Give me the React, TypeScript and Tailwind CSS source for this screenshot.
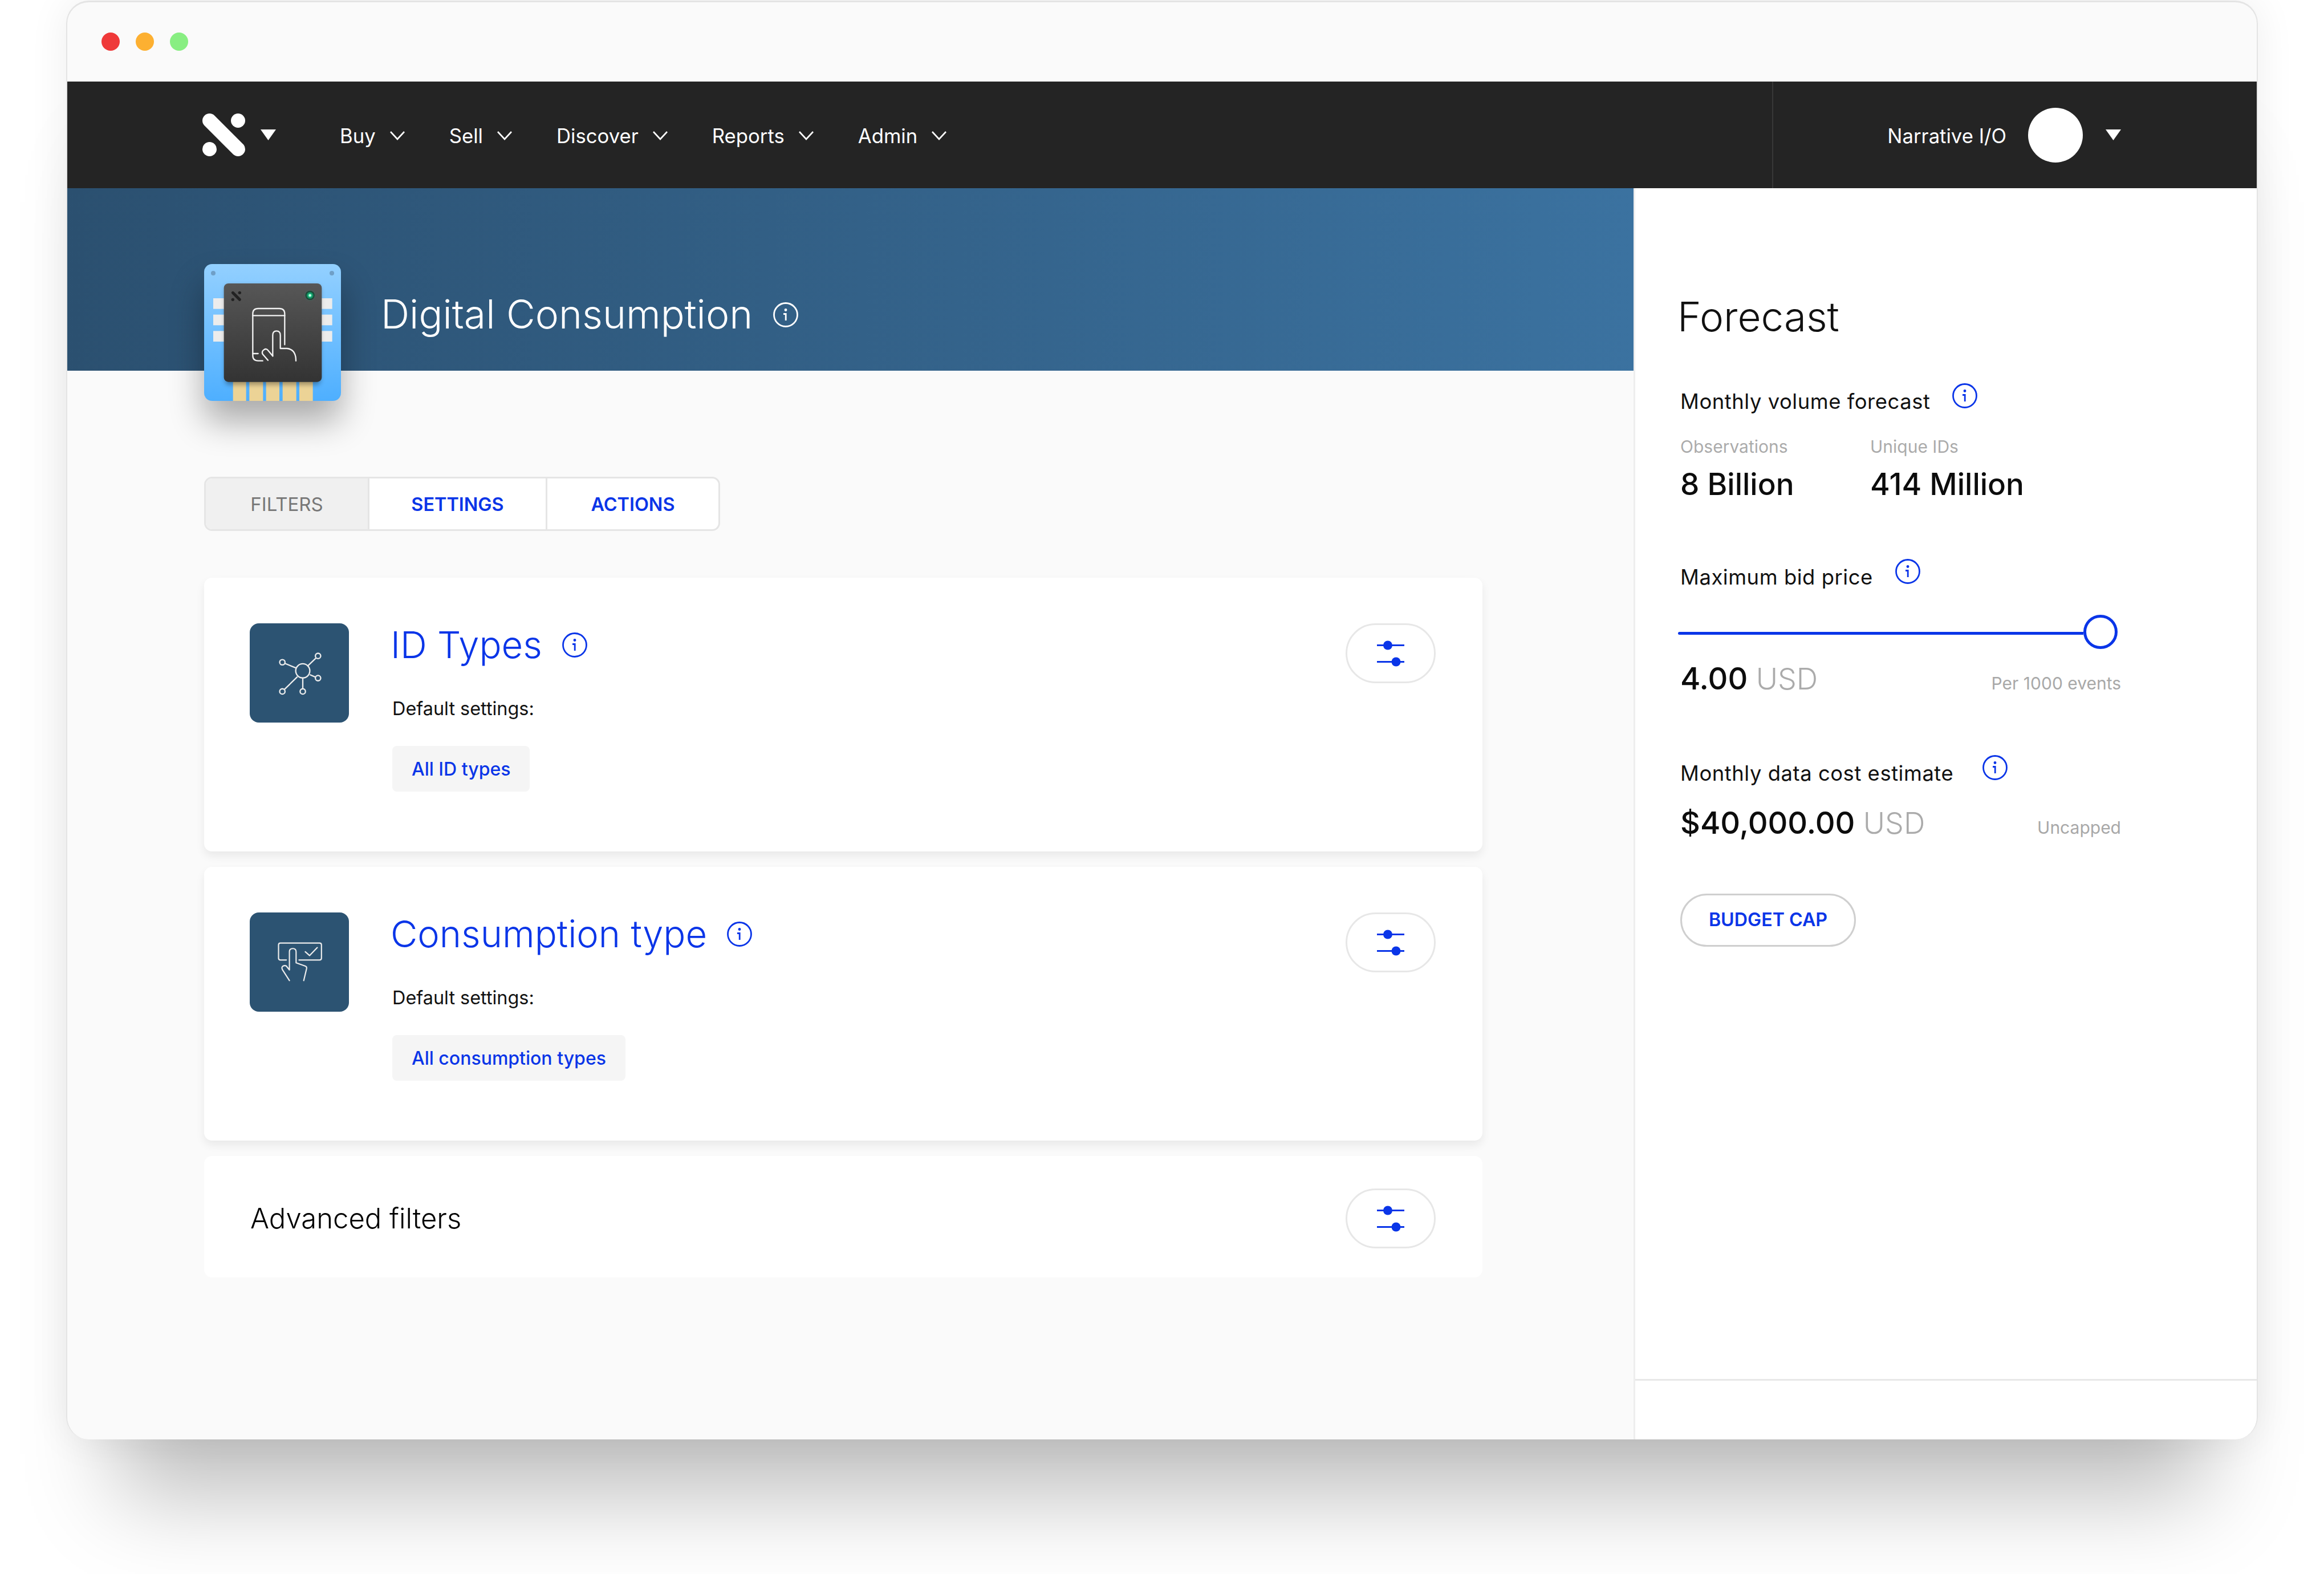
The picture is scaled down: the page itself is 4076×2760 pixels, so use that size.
import React from 'react'

function Caret({ className = '' }: { className?: string }) {
  return (
    <svg width="27" height="19" viewBox="0 0 27 19" className={className}>
      <polygon points="0,0 27,0 13.5,19" fill="#fff" />
    </svg>
  )
}

function Chevron() {
  return (
    <svg width="28" height="17" viewBox="0 0 28 17" fill="none" stroke="#fff" strokeWidth="2.6" className="mt-[3px]">
      <polyline points="2,2 14,15 26,2" />
    </svg>
  )
}

function Logo() {
  return (
    <svg width="75" height="75" viewBox="0 0 75 75">
      <line x1="12.5" y1="12.5" x2="62.5" y2="62.5" stroke="#fff" strokeWidth="25" strokeLinecap="round" />
      <circle cx="62.5" cy="12.5" r="12.5" fill="#fff" />
      <circle cx="12.5" cy="62.5" r="12.5" fill="#fff" />
    </svg>
  )
}

function InfoIcon({ className = '', color = '#0a35e8' }: { className?: string; color?: string }) {
  return (
    <svg width="44" height="44" viewBox="0 0 44 44" fill="none" className={`shrink-0 ${className}`}>
      <circle cx="22" cy="22" r="20.5" stroke={color} strokeWidth="2.8" />
      <circle cx="22" cy="13.5" r="2.4" fill={color} />
      <path d="M18 20.5h4.2V32" stroke={color} strokeWidth="2.8" />
    </svg>
  )
}

function ChipArt() {
  return (
    <svg width="240" height="240" viewBox="54 66 720 720">
      <defs>
        <linearGradient id="chipBlue" x1="0" y1="0" x2="0" y2="1">
          <stop offset="0" stopColor="#93d0ff" />
          <stop offset="1" stopColor="#4eafff" />
        </linearGradient>
        <linearGradient id="chipDark" x1="0" y1="0" x2="0" y2="1">
          <stop offset="0" stopColor="#575757" />
          <stop offset="1" stopColor="#333333" />
        </linearGradient>
        <filter id="chipBlur" x="-20%" y="-20%" width="140%" height="140%">
          <feGaussianBlur stdDeviation="12" />
        </filter>
        <filter id="ledGlow" x="-100%" y="-100%" width="300%" height="300%">
          <feGaussianBlur stdDeviation="6" />
        </filter>
      </defs>
      <rect x="54" y="66" width="720" height="720" rx="42" fill="url(#chipBlue)" />
      <circle cx="102" cy="114" r="12" fill="#6f9fc7" />
      <circle cx="726" cy="114" r="12" fill="#6f9fc7" />
      <g fill="#ececec">
        <rect x="102" y="246" width="70" height="56" />
        <rect x="102" y="332" width="70" height="56" />
        <rect x="102" y="418" width="70" height="56" />
        <rect x="660" y="246" width="68" height="56" />
        <rect x="660" y="332" width="68" height="56" />
        <rect x="660" y="418" width="68" height="56" />
      </g>
      <g fill="#ecd396">
        <rect x="206" y="670" width="69" height="116" />
        <rect x="292" y="670" width="72" height="116" />
        <rect x="380" y="670" width="70" height="116" />
        <rect x="467" y="670" width="72" height="116" />
        <rect x="555" y="670" width="71" height="116" />
      </g>
      <rect x="165" y="180" width="500" height="520" rx="20" fill="#000" opacity="0.35" filter="url(#chipBlur)" />
      <rect x="158" y="168" width="515" height="518" rx="24" fill="url(#chipDark)" />
      <g fill="#222">
        <line x1="205" y1="217" x2="241" y2="253" stroke="#222" strokeWidth="15" strokeLinecap="round" />
        <circle cx="241" cy="217" r="8" />
        <circle cx="205" cy="253" r="8" />
      </g>
      <circle cx="611" cy="231" r="24" fill="#1a1a1a" />
      <circle cx="611" cy="231" r="18" fill="#19d08a" filter="url(#ledGlow)" />
      <circle cx="611" cy="231" r="7" fill="#c8ffe6" />
      <g fill="none" stroke="#f2f2f2" strokeWidth="7" strokeLinecap="round" strokeLinejoin="round">
        <path d="M362 575H338Q310 575 310 547V328Q310 300 338 300H450Q478 300 478 328V490" />
        <path d="M310 337H478" />
        <path d="M310 537H338" />
        <path d="M415 550V440Q415 418 435 418Q455 418 455 440V510H490Q537 515 537 575" />
        <path d="M390 572L362 540Q355 525 370 516Q382 508 392 522L415 550" />
      </g>
    </svg>
  )
}

function NetworkIcon() {
  return (
    <svg width="174" height="174" viewBox="54 36 520 520" fill="none" stroke="#ececec" strokeWidth="7">
      <circle cx="332" cy="285" r="37" />
      <circle cx="225" cy="240" r="14" />
      <circle cx="412" cy="207" r="14" />
      <circle cx="412" cy="323" r="14" />
      <circle cx="225" cy="393" r="14" />
      <circle cx="332" cy="393" r="14" />
      <path d="M238 246L297 270M402 217L359 258M369 305L399 318M304 316L235 383M332 322V379" />
    </svg>
  )
}

function TouchIcon() {
  return (
    <svg width="174" height="174" viewBox="54 56 520 520" fill="none" stroke="#ececec" strokeWidth="6.5" strokeLinecap="round" strokeLinejoin="round">
      <path d="M246 305H215Q205 305 205 295V226Q205 216 215 216H420Q430 216 430 226V295Q430 305 420 305H312" />
      <path d="M262 413L225 355Q218 340 233 335Q245 332 250 342L262 357V262Q262 245 280 245Q297 245 297 262V320L345 337Q354 340 352 350L337 413" />
      <path d="M345 262L368 282L408 240" />
    </svg>
  )
}

function SliderIcon() {
  return (
    <svg width="48" height="46" viewBox="0 0 48 46" fill="#0a35e8">
      <rect x="0" y="7" width="48" height="3" />
      <rect x="0" y="36" width="48" height="3" />
      <circle cx="19" cy="8.5" r="8" />
      <circle cx="33.5" cy="37.5" r="8" />
    </svg>
  )
}

function SettingsButton() {
  return (
    <button className="flex h-[105px] w-[158px] shrink-0 items-center justify-center rounded-full border-[3px] border-[#e7e7e7] bg-white">
      <SliderIcon />
    </button>
  )
}

const navItems = ['Buy', 'Sell', 'Discover', 'Reports', 'Admin']

function Navbar() {
  return (
    <div className="flex h-[187px] shrink-0 items-center bg-[#242424] pl-[237px] text-[34.7px] text-white">
      <Logo />
      <Caret className="ml-[27px] mr-[112px]" />
      <div className="flex items-center gap-[77px]">
        {navItems.map((item) => (
          <div key={item} className="flex items-center gap-[24px]">
            <span className="pt-[3px]">{item}</span>
            <Chevron />
          </div>
        ))}
      </div>
      <div className="ml-auto flex h-full w-[850px] items-center justify-end border-l-[2px] border-[#383838] pr-[238px]">
        <span className="pt-[3px]">Narrative I/O</span>
        <div className="ml-[38px] h-[96px] w-[96px] rounded-full bg-white" />
        <Caret className="ml-[40px]" />
      </div>
    </div>
  )
}

function FilterCard({ icon, title, chip }: { icon: React.ReactNode; title: string; chip: string }) {
  return (
    <div className="flex h-[480px] items-start rounded-[14px] bg-white pl-[80px] pr-[82px] pt-[80px] shadow-[0_8px_16px_rgba(0,0,0,0.07)]">
      <div className="flex h-[174px] w-[174px] shrink-0 items-center justify-center rounded-[16px] bg-[#2c5372]">
        {icon}
      </div>
      <div className="ml-[76px] flex-1">
        <div className="-ml-[3px] flex h-[76px] items-center gap-[35px] text-[65px] font-light text-[#0a35e8]">
          <span>{title}</span>
          <InfoIcon />
        </div>
        <div className="mt-[52px] text-[32.4px] leading-[44px] text-[#111]">Default settings:</div>
        <div className="mt-[43px] inline-flex h-[80px] items-center rounded-[8px] bg-[#f5f5f5] px-[34px] pt-[2px] text-[32px] font-medium text-[#0a35e8]">
          {chip}
        </div>
      </div>
      <SettingsButton />
    </div>
  )
}

function MainColumn() {
  return (
    <div className="w-[2747px] shrink-0 bg-[#fafafa]">
      <div className="flex h-[320px] items-start bg-gradient-to-r from-[#2b5070] to-[#3b72a0] pl-[240px] pt-[133px]">
        <div className="h-[240px] w-[240px] shrink-0 rounded-[16px] shadow-[0_36px_60px_rgba(0,0,0,0.32)]">
          <ChipArt />
        </div>
        <div className="ml-[70px] mt-[44px] flex h-[88px] items-center gap-[36px] text-[69.7px] font-light text-white">
          <span>Digital Consumption</span>
          <InfoIcon color="#ffffff" className="mt-[2px]" />
        </div>
      </div>

      <div className="ml-[240px] mt-[186px] flex h-[95px] w-[905px] overflow-hidden rounded-[14px] border-[3px] border-[#e5e5e5] bg-white text-[32.4px]">
        <div className="flex w-[284px] items-center justify-center bg-[#f0f0f0] pt-[3px] text-[33px] text-[#777]">FILTERS</div>
        <div className="flex w-[315px] items-center justify-center border-x-[3px] border-[#e5e5e5] pt-[3px] font-semibold text-[#0a35e8]">
          SETTINGS
        </div>
        <div className="flex flex-1 items-center justify-center pt-[3px] font-semibold text-[#0a35e8]">ACTIONS</div>
      </div>

      <div className="ml-[240px] mt-[82px] flex w-[2242px] flex-col gap-[27px]">
        <FilterCard icon={<NetworkIcon />} title="ID Types" chip="All ID types" />
        <FilterCard icon={<TouchIcon />} title="Consumption type" chip="All consumption types" />
        <div className="flex h-[213px] items-center rounded-[14px] bg-white pl-[81px] pr-[82px] pt-[6px]">
          <span className="flex-1 text-[49px] font-light text-black">Advanced filters</span>
          <SettingsButton />
        </div>
      </div>
    </div>
  )
}

function Amount({ value, note }: { value: string; note: string }) {
  return (
    <div className="flex w-[773px] items-baseline justify-between leading-[64px]">
      <span className="text-[54px] font-medium text-[#0c0c0c]">
        {value} <span className="text-[52px] font-light text-[#ababab]">USD</span>
      </span>
      <span className="text-[30px] text-[#a8a8a8]">{note}</span>
    </div>
  )
}

function ForecastPanel() {
  return (
    <div className="flex flex-1 flex-col border-l-[3px] border-[#eeeeee] bg-white">
      <div className="flex-1 pl-[79px] pt-[185px] text-[#111]">
        <h2 className="-ml-[5px] text-[71px] font-light leading-[80px]">Forecast</h2>

        <div className="mt-[77px] flex items-center gap-[39px] text-[36.4px] leading-[44px] tracking-[0.55px]">
          <span>Monthly volume forecast</span>
          <InfoIcon className="mb-[20px]" />
        </div>
        <div className="mt-[29px] flex">
          <div className="w-[333px]">
            <div className="text-[30px] leading-[36px] text-[#ababab]">Observations</div>
            <div className="mt-[16px] text-[53px] font-medium leading-[64px] text-[#0c0c0c]">8 Billion</div>
          </div>
          <div>
            <div className="text-[30px] leading-[36px] text-[#ababab]">Unique IDs</div>
            <div className="mt-[16px] text-[53px] font-medium leading-[64px] text-[#0c0c0c]">414 Million</div>
          </div>
        </div>

        <div className="mt-[99px] flex items-center gap-[39px] text-[36.4px] leading-[44px] tracking-[0.55px]">
          <span>Maximum bid price</span>
          <InfoIcon className="mb-[20px]" />
        </div>
        <div className="-ml-[4px] mt-[34px] flex h-[60px] w-[771px] items-center">
          <div className="mt-[4px] h-[5px] flex-1 rounded-l-full bg-[#0a35e8]" />
          <div className="h-[60px] w-[60px] rounded-full border-[5px] border-[#0a35e8] bg-white" />
        </div>
        <div className="mt-[20px]">
          <Amount value="4.00" note="Per 1000 events" />
        </div>

        <div className="mt-[94px] flex items-center gap-[51px] text-[36.4px] leading-[44px] tracking-[0.55px]">
          <span>Monthly data cost estimate</span>
          <InfoIcon className="mb-[20px]" />
        </div>
        <div className="mt-[23px]">
          <Amount value="$40,000.00" note="Uncapped" />
        </div>

        <button className="mt-[84px] flex h-[93px] w-[308px] items-center justify-center rounded-full border-[3px] border-[#cfcfcf] text-[32.2px] font-semibold text-[#0a35e8]">
          BUDGET CAP
        </button>
      </div>
      <div className="h-[106px] shrink-0 border-t-[3px] border-[#e8e8e8]" />
    </div>
  )
}

export default function App() {
  return (
    <div className="h-[2760px] w-[4076px] overflow-hidden bg-white pl-[116px] pt-[1px] font-[Inter,sans-serif]">
      <div className="flex h-[2523px] w-[3844px] flex-col overflow-hidden rounded-[40px] border-x-[2px] border-t-[3px] border-[#e4e4e4] bg-[#fafafa] shadow-[0_0_70px_rgba(0,0,0,0.07),0_190px_150px_-90px_rgba(0,0,0,0.25)]">
        <div className="flex h-[139px] shrink-0 items-center gap-[28px] pl-[60px] pb-[2px]">
          <div className="h-[32px] w-[32px] rounded-full bg-[#ef3939]" />
          <div className="h-[32px] w-[32px] rounded-full bg-[#fdb031]" />
          <div className="h-[32px] w-[32px] rounded-full bg-[#88ee82]" />
        </div>
        <Navbar />
        <div className="flex flex-1">
          <MainColumn />
          <ForecastPanel />
        </div>
      </div>
    </div>
  )
}
